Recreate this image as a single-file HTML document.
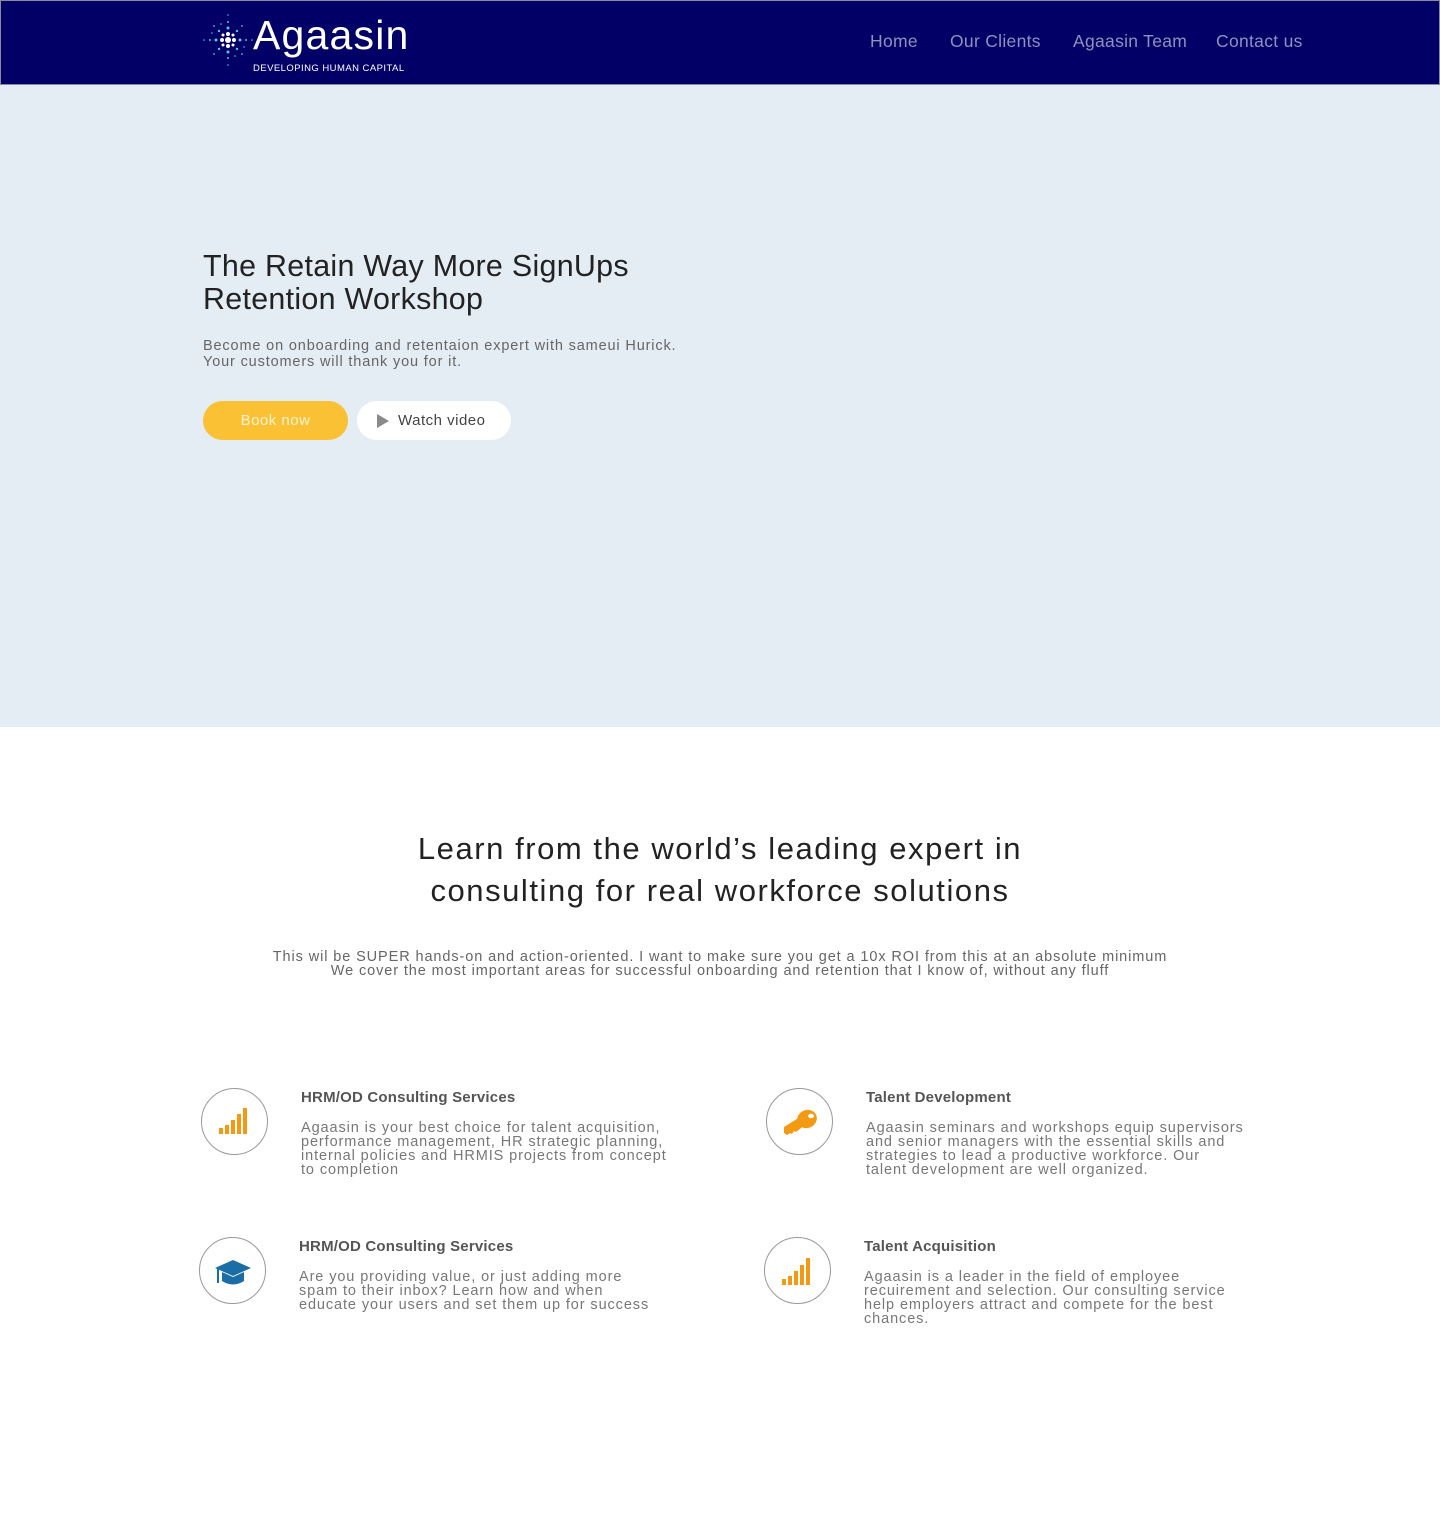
<!DOCTYPE html>
<html><head><meta charset="utf-8">
<style>
*{margin:0;padding:0;box-sizing:border-box}
body{width:1440px;height:1534px;background:#fff;font-family:"Liberation Sans",sans-serif;color:#222;position:relative;overflow:hidden}
.hdr{position:absolute;left:0;top:0;width:1440px;height:85px;background:#020066;border:1px solid #8a8a9a}
.logo{position:absolute;left:253px;top:12px;color:#fff;font-size:41px;letter-spacing:1.2px}
.tag{position:absolute;left:253px;top:63px;color:#fff;font-size:9.5px;letter-spacing:0.45px}
.nav{position:absolute;top:31px;color:#8e91bd;font-size:17.5px;letter-spacing:0.3px}
.hero{position:absolute;left:0;top:85px;width:1440px;height:642px;background:#e4ecf4}
h1{position:absolute;left:203px;top:250px;font-weight:normal;font-size:30.4px;line-height:33px;color:#222;letter-spacing:0.3px}
.sub{position:absolute;left:203px;top:338px;font-size:14.5px;line-height:16px;color:#666;letter-spacing:0.85px}
.b1{position:absolute;left:203px;top:401px;width:145px;height:39px;border-radius:20px;background:#fbc134;color:#fff4d0;font-size:15px;text-align:center;line-height:39px;letter-spacing:0.5px}
.b2{position:absolute;left:357px;top:401px;width:154px;height:39px;border-radius:20px;background:#fff;color:#444;font-size:15px;line-height:39px;padding-left:41px;letter-spacing:0.5px}
.b2:before{content:"";position:absolute;left:20px;top:13px;border-left:12px solid #8a8a8a;border-top:7px solid transparent;border-bottom:7px solid transparent}
h2{position:absolute;left:0;width:1440px;top:828px;text-align:center;font-weight:normal;font-size:31px;line-height:42px;color:#222;letter-spacing:1.55px}
.p2{position:absolute;left:0;width:1440px;top:950px;text-align:center;font-size:14.5px;line-height:14px;color:#666;letter-spacing:0.9px}
.ic{position:absolute;width:67px;height:67px;border:1px solid #999;border-radius:50%}
.ic svg{position:absolute;left:0;top:0}
.t{position:absolute;font-size:15px;font-weight:bold;color:#555;letter-spacing:0.2px}
.d{position:absolute;font-size:14.5px;line-height:14px;color:#777;letter-spacing:0.9px}
</style></head><body>
<div class="hdr"></div>
<svg style="position:absolute;left:200px;top:10px" width="56" height="60" viewBox="0 0 56 60">
<g fill="#fff">
<circle cx="28" cy="30" r="3"/><circle cx="22" cy="30" r="2"/><circle cx="34" cy="30" r="2"/><circle cx="28" cy="24" r="2"/><circle cx="28" cy="36" r="2"/>
<circle cx="23" cy="25" r="1.5"/><circle cx="33" cy="25" r="1.5"/><circle cx="23" cy="35" r="1.5"/><circle cx="33" cy="35" r="1.5"/>
</g>
<g fill="#4fc8d8">
<circle cx="16" cy="30" r="1.5"/><circle cx="40" cy="30" r="1.5"/><circle cx="28" cy="18" r="1.5"/><circle cx="28" cy="42" r="1.5"/>
<circle cx="19" cy="21" r="1.2"/><circle cx="37" cy="21" r="1.2"/><circle cx="19" cy="39" r="1.2"/><circle cx="37" cy="39" r="1.2"/>
<circle cx="10" cy="30" r="1"/><circle cx="46" cy="30" r="1"/><circle cx="28" cy="12" r="1"/><circle cx="28" cy="48" r="1"/>
<circle cx="14" cy="16" r="0.9"/><circle cx="42" cy="16" r="0.9"/><circle cx="14" cy="44" r="0.9"/><circle cx="42" cy="44" r="0.9"/>
<circle cx="4" cy="30" r="0.8"/><circle cx="28" cy="5" r="0.8"/><circle cx="28" cy="55" r="0.8"/><circle cx="52" cy="30" r="0.8"/>
<circle cx="21" cy="14" r="0.8"/><circle cx="35" cy="46" r="0.8"/><circle cx="12" cy="23" r="0.8"/><circle cx="44" cy="37" r="0.8"/>
</g></svg>
<div class="logo">Agaasin</div>
<div class="tag">DEVELOPING HUMAN CAPITAL</div>
<div class="nav" style="left:870px">Home</div>
<div class="nav" style="left:950px">Our Clients</div>
<div class="nav" style="left:1073px">Agaasin Team</div>
<div class="nav" style="left:1216px">Contact us</div>
<div class="hero"></div>
<h1>The Retain Way More SignUps<br>Retention Workshop</h1>
<div class="sub">Become on onboarding and retentaion expert with sameui Hurick.<br>Your customers will thank you for it.</div>
<div class="b1">Book now</div>
<div class="b2">Watch video</div>
<h2>Learn from the world’s leading expert in<br>consulting for real workforce solutions</h2>
<div class="p2">This wil be SUPER hands-on and action-oriented. I want to make sure you get a 10x ROI from this at an absolute minimum<br>We cover the most important areas for successful onboarding and retention that I know of, without any fluff</div>

<div class="ic" style="left:201px;top:1088px"><svg width="67" height="67"><g fill="#f39a12"><rect x="17" y="39" width="4" height="6"/><rect x="23" y="36" width="4" height="9"/><rect x="29" y="31" width="4" height="14"/><rect x="35" y="25" width="4" height="20"/><rect x="41" y="19" width="4" height="26"/></g></svg></div>
<div class="t" style="left:301px;top:1089px">HRM/OD Consulting Services</div>
<div class="d" style="left:301px;top:1121px">Agaasin is your best choice for talent acquisition,<br>performance management, HR strategic planning,<br>internal policies and HRMIS projects from concept<br>to completion</div>

<div class="ic" style="left:766px;top:1088px"><svg width="67" height="67"><g fill="#f39a12"><ellipse cx="40" cy="30" rx="10" ry="9" transform="rotate(-25 40 30)"/><path d="M33 28 L17 38 L17 44 L20 46 L23 44 L25 45 L27 42 L29 43 L38 36 Z"/></g><ellipse cx="44" cy="27" rx="3" ry="2.2" fill="#fff"/></svg></div>
<div class="t" style="left:866px;top:1089px">Talent Development</div>
<div class="d" style="left:866px;top:1121px">Agaasin seminars and workshops equip supervisors<br>and senior managers with the essential skills and<br>strategies to lead a productive workforce. Our<br>talent development are well organized.</div>

<div class="ic" style="left:199px;top:1237px"><svg width="67" height="67"><g fill="#1a6ea5"><path d="M15 30 L33 22 L51 30 L33 38 Z"/><path d="M22 34 L22 43 Q33 50 44 43 L44 34 L33 39 Z"/><rect x="17" y="31" width="2" height="14"/></g></svg></div>
<div class="t" style="left:299px;top:1238px">HRM/OD Consulting Services</div>
<div class="d" style="left:299px;top:1270px">Are you providing value, or just adding more<br>spam to their inbox? Learn how and when<br>educate your users and set them up for success</div>

<div class="ic" style="left:764px;top:1237px"><svg width="67" height="67"><g fill="#f39a12"><rect x="17" y="41" width="4" height="6"/><rect x="23" y="38" width="4" height="9"/><rect x="29" y="33" width="4" height="14"/><rect x="35" y="27" width="4" height="20"/><rect x="41" y="20" width="4" height="27"/></g></svg></div>
<div class="t" style="left:864px;top:1238px">Talent Acquisition</div>
<div class="d" style="left:864px;top:1270px">Agaasin is a leader in the field of employee<br>recuirement and selection. Our consulting service<br>help employers attract and compete for the best<br>chances.</div>
</body></html>
